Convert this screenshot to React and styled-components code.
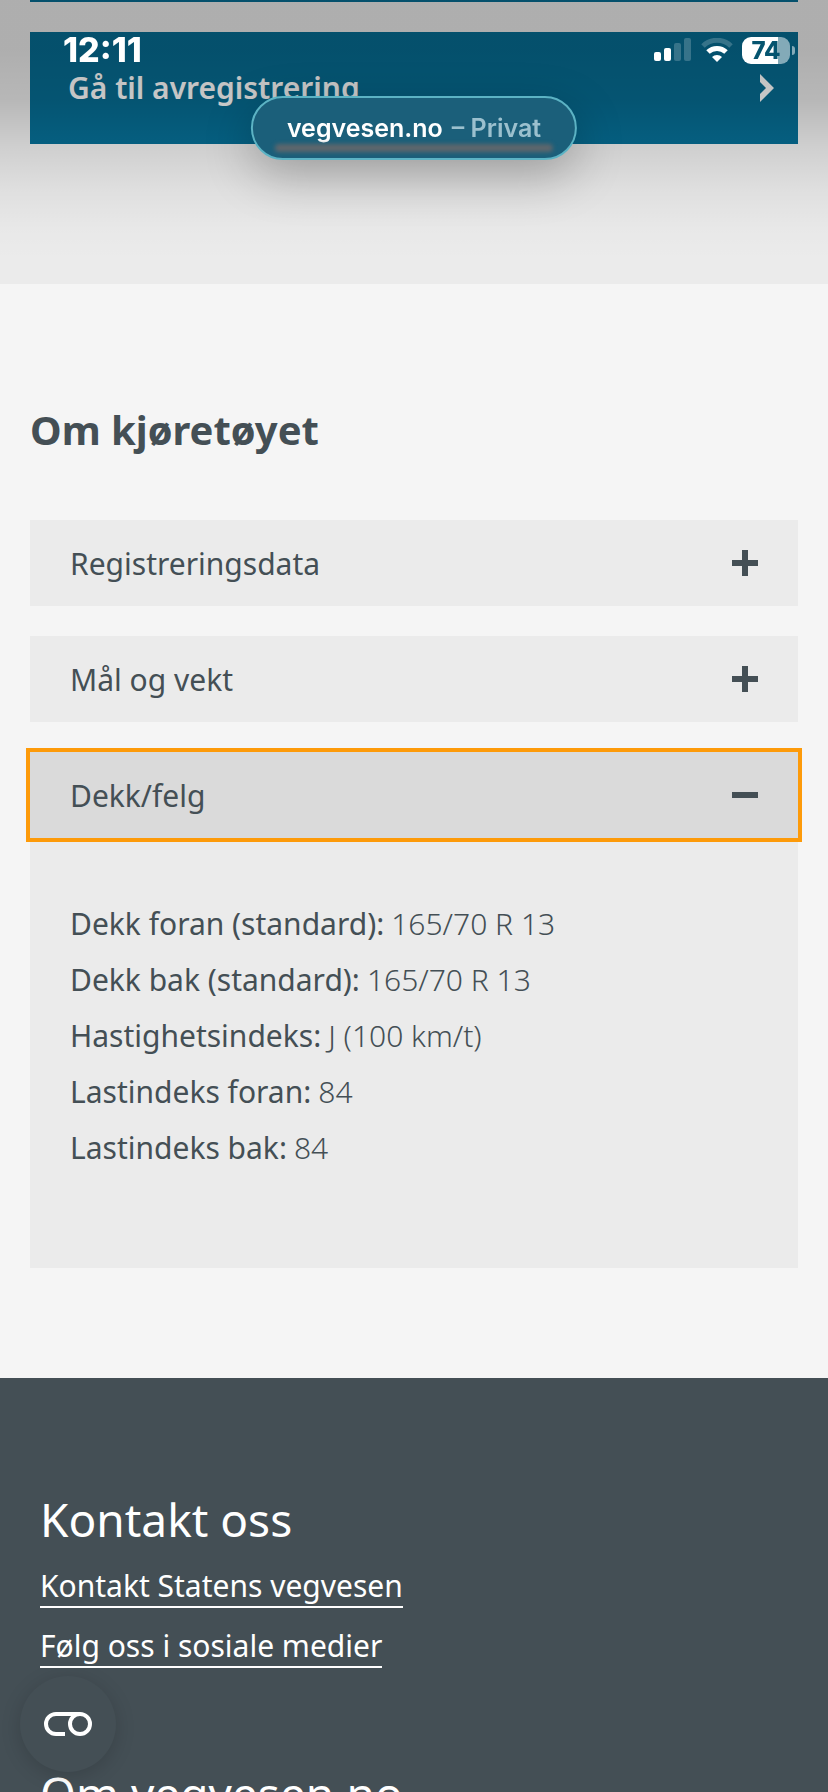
import React from "react";
import styled, { createGlobalStyle } from "styled-components";

const accordions = [
  { id: "registreringsdata", title: "Registreringsdata" },
  { id: "maal-og-vekt", title: "Mål og vekt" },
  {
    id: "dekk-felg",
    title: "Dekk/felg",
    rows: [
      ["Dekk foran (standard):", "165/70 R 13"],
      ["Dekk bak (standard):", "165/70 R 13"],
      ["Hastighetsindeks:", "J (100 km/t)"],
      ["Lastindeks foran:", "84"],
      ["Lastindeks bak:", "84"],
    ],
  },
];

const App = () => {
  const [open, setOpen] = React.useState("dekk-felg");

  return (
    <>
      <GlobalStyle />
      <StatusBar>
        <Clock>12:11</Clock>
        <StatusIcons>
          <Signal />
          <Wifi />
          <BatteryWrap>
            <Battery>74</Battery>
            <BatteryTip />
          </BatteryWrap>
        </StatusIcons>
      </StatusBar>
      <AddressPill type="button">
        <span>vegvesen.no</span>
        <Muted>– Privat</Muted>
      </AddressPill>

      <Hero>
        <PreviousCard />
        <ActionCard href="#avregistrering">
          Gå til avregistrering
          <svg width="14" height="28" viewBox="0 0 14 28" aria-hidden="true">
            <path d="M0 0l14 14L0 28v-8l6-6-6-6z" fill="currentColor" />
          </svg>
        </ActionCard>
      </Hero>

      <Main>
        <Title>Om kjøretøyet</Title>
        {accordions.map(({ id, title, rows }) => {
          const isOpen = open === id;
          return (
            <Item key={id}>
              <ItemButton
                type="button"
                $open={isOpen}
                aria-expanded={isOpen}
                onClick={() => setOpen(isOpen ? "" : id)}
              >
                {title}
                <svg width="26" height="26" viewBox="0 0 26 26" aria-hidden="true">
                  <path d="M0 10h26v6H0z" fill="currentColor" />
                  {!isOpen && <path d="M10 0h6v26h-6z" fill="currentColor" />}
                </svg>
              </ItemButton>
              {isOpen && rows && (
                <Panel>
                  {rows.map(([label, value]) => (
                    <Row key={label}>
                      <dt>{label}</dt>
                      <dd>{value}</dd>
                    </Row>
                  ))}
                </Panel>
              )}
            </Item>
          );
        })}
      </Main>

      <Footer>
        <FooterTitle>Kontakt oss</FooterTitle>
        <FooterLinks>
          <li>
            <a href="#kontakt">Kontakt Statens vegvesen</a>
          </li>
          <li>
            <a href="#sosiale-medier">Følg oss i sosiale medier</a>
          </li>
        </FooterLinks>
        <FooterTitle>Om vegvesen.no</FooterTitle>
      </Footer>

      <CookieButton type="button" aria-label="Informasjonskapsler">
        <svg width="50" height="26" viewBox="0 0 50 26" fill="none" aria-hidden="true">
          <path d="M22 23h-9a10 10 0 0 1 0-20h24" stroke="#fff" strokeWidth="4" />
          <circle cx="37" cy="13" r="10" stroke="#fff" strokeWidth="4" />
        </svg>
      </CookieButton>
    </>
  );
};

const Signal = () => (
  <svg width="38" height="24" viewBox="0 0 38 24" fill="#fff" aria-hidden="true">
    <rect x="0" y="14" width="7" height="9" rx="2" />
    <rect x="10" y="10" width="7" height="13" rx="2" />
    <rect x="20" y="5" width="7" height="18" rx="2" opacity="0.2" />
    <rect x="30" y="0" width="7" height="23" rx="2" opacity="0.2" />
  </svg>
);

const Wifi = () => (
  <svg width="32" height="24" viewBox="0 0 32 24" fill="none" aria-hidden="true">
    <path d="M2 8a20 20 0 0 1 28 0" stroke="#fff" strokeWidth="5" opacity="0.2" />
    <path d="M7 14a13 13 0 0 1 18 0" stroke="#fff" strokeWidth="5" />
    <path d="M11 19a7 7 0 0 1 10 0l-5 5z" fill="#fff" />
  </svg>
);

export default App;

const GlobalStyle = createGlobalStyle`
  * {
    box-sizing: border-box;
  }
  html {
    scrollbar-width: none;
  }
  body {
    margin: 0;
    background: #f5f5f5;
    color: #444f55;
    font-family: "Noto Sans", sans-serif;
    font-size: 30px;
  }
`;

const StatusBar = styled.div`
  position: fixed;
  z-index: 2;
  top: 0;
  left: 0;
  right: 0;
  height: 100px;
  padding: 0 33px 0 63px;
  display: flex;
  justify-content: space-between;
  align-items: center;
  color: white;
  font-family: Inter, sans-serif;
  pointer-events: none;
`;

const Clock = styled.div`
  font-size: 34px;
  font-weight: 800;
  line-height: 32px;
`;

const StatusIcons = styled.div`
  display: flex;
  align-items: center;
  gap: 9px;
`;

const BatteryWrap = styled.div`
  display: flex;
  align-items: center;
  gap: 2px;
`;

const Battery = styled.div`
  width: 48px;
  height: 27px;
  border-radius: 9px;
  background: linear-gradient(90deg, #fff 75%, #83aab8 75%);
  color: #05546f;
  font-size: 24px;
  font-weight: 800;
  line-height: 27px;
  text-align: center;
`;

const BatteryTip = styled.div`
  width: 3px;
  height: 9px;
  border-radius: 0 4px 4px 0;
  background: #83aab8;
`;

const AddressPill = styled.button`
  position: fixed;
  z-index: 3;
  top: 96px;
  left: 50%;
  transform: translateX(-50%);
  height: 64px;
  padding: 0 34px;
  display: flex;
  align-items: center;
  gap: 9px;
  border: 2px solid #5cb3c4;
  border-radius: 32px;
  background: #1b5f7a;
  box-shadow: 0 16px 48px rgba(0, 0, 0, 0.25);
  color: white;
  font-family: Inter, sans-serif;
  font-size: 25px;
  font-weight: 600;
  white-space: nowrap;

  &:after {
    content: "";
    position: absolute;
    left: 22px;
    right: 22px;
    bottom: 6px;
    height: 8px;
    border-radius: 8px;
    background: #5f666c;
    filter: blur(2px);
  }
`;

const Muted = styled.span`
  color: #9bc0ce;
`;

const Hero = styled.header`
  position: relative;
  height: 284px;
  padding: 0 30px;
  background: #ebebeb;

  /* shade behind the status bar */
  &:after {
    content: "";
    position: absolute;
    inset: 0;
    background: linear-gradient(
      rgba(0, 0, 0, 0.26) 0,
      rgba(0, 0, 0, 0.26) 50px,
      rgba(0, 0, 0, 0.22) 100px,
      rgba(0, 0, 0, 0.12) 146px,
      rgba(0, 0, 0, 0.05) 190px,
      rgba(0, 0, 0, 0.01) 230px,
      rgba(0, 0, 0, 0) 260px
    );
    pointer-events: none;
  }
`;

const PreviousCard = styled.div`
  height: 2px;
  margin-bottom: 30px;
  background: #066c92;
`;

const ActionCard = styled.a`
  height: 112px;
  padding: 0 24px 0 38px;
  display: flex;
  align-items: center;
  justify-content: space-between;
  background: #066c92;
  color: white;
  font-weight: 600;
  line-height: 32px;
  text-decoration: none;
`;

const Main = styled.main`
  padding: 118px 30px 110px;
`;

const Title = styled.h1`
  margin: 0 0 62px;
  font-size: 40px;
  font-weight: 700;
  line-height: 56px;
`;

const Item = styled.section`
  background: #ebebeb;

  & + & {
    margin-top: 30px;
  }
`;

const ItemButton = styled.button`
  width: 100%;
  height: 86px;
  padding: 0 40px;
  display: flex;
  align-items: center;
  justify-content: space-between;
  border: 0;
  background: ${({ $open }) => ($open ? "#dadada" : "#ebebeb")};
  outline: ${({ $open }) => ($open ? "4px solid #fd9a09" : "none")};
  color: inherit;
  font: inherit;
  cursor: pointer;
`;

const Panel = styled.dl`
  margin: 0;
  padding: 58px 40px 92px;
`;

const Row = styled.div`
  display: flex;
  gap: 7px;
  line-height: 56px;

  dd {
    margin: 0;
    font-weight: 300;
  }
`;

const Footer = styled.footer`
  padding: 108px 40px 40px;
  background: #444f55;
  color: white;
`;

const FooterTitle = styled.h2`
  margin: 0;
  font-size: 46px;
  font-weight: 400;
  line-height: 66px;
`;

const FooterLinks = styled.ul`
  margin: 0 0 92px;
  padding: 14px 0 0;
  display: flex;
  flex-direction: column;
  align-items: flex-start;
  gap: 18px;
  list-style: none;

  a {
    display: block;
    border-bottom: 2px solid white;
    color: white;
    line-height: 40px;
    text-decoration: none;
  }
`;

const CookieButton = styled.button`
  position: fixed;
  z-index: 2;
  left: 20px;
  bottom: 20px;
  width: 96px;
  height: 96px;
  display: flex;
  align-items: center;
  justify-content: center;
  border: 0;
  border-radius: 50%;
  background: #444f55;
  box-shadow: 0 4px 20px rgba(0, 0, 0, 0.16);
`;
